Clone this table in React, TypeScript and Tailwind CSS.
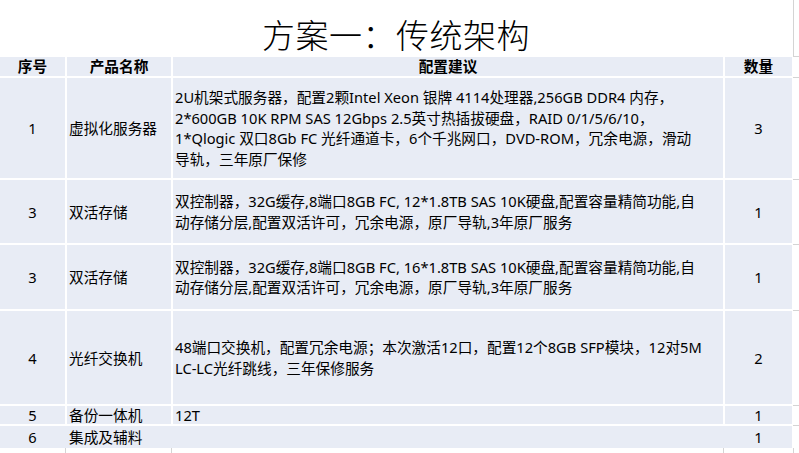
import React from "react";

const font = { fontFamily: '"Noto Sans", "Noto Sans CJK SC", sans-serif' };
const titleFont = { fontFamily: '"Liberation Sans", "Noto Sans CJK SC", sans-serif' };

function Cell({ children, className = "" }: { children?: React.ReactNode; className?: string }) {
  return <div className={"bg-[#e8ecf5] flex items-center " + className}>{children}</div>;
}

function Lines({ lines }: { lines: string[] }) {
  return (
    <div className="flex flex-col pl-[2px]">
      {lines.map((l, i) => (
        <div key={i} className="whitespace-nowrap leading-[20.5px]">
          {l}
        </div>
      ))}
    </div>
  );
}

const rows: { h: string; no: string; name: string; lines: string[]; qty: string }[] = [
  {
    h: "h-[100px]",
    no: "1",
    name: "虚拟化服务器",
    lines: [
      "2U机架式服务器，配置2颗Intel Xeon 银牌 4114处理器,256GB DDR4 内存，",
      "2*600GB 10K RPM SAS 12Gbps 2.5英寸热插拔硬盘，RAID 0/1/5/6/10，",
      "1*Qlogic 双口8Gb FC 光纤通道卡，6个千兆网口，DVD-ROM，冗余电源，滑动",
      "导轨，三年原厂保修",
    ],
    qty: "3",
  },
  {
    h: "h-[63px]",
    no: "3",
    name: "双活存储",
    lines: [
      "双控制器，32G缓存,8端口8GB FC, 12*1.8TB SAS 10K硬盘,配置容量精简功能,自",
      "动存储分层,配置双活许可，冗余电源，原厂导轨,3年原厂服务",
    ],
    qty: "1",
  },
  {
    h: "h-[64px]",
    no: "3",
    name: "双活存储",
    lines: [
      "双控制器，32G缓存,8端口8GB FC, 16*1.8TB SAS 10K硬盘,配置容量精简功能,自",
      "动存储分层,配置双活许可，冗余电源，原厂导轨,3年原厂服务",
    ],
    qty: "1",
  },
  {
    h: "h-[93px]",
    no: "4",
    name: "光纤交换机",
    lines: [
      "48端口交换机，配置冗余电源；本次激活12口，配置12个8GB SFP模块，12对5M",
      "LC-LC光纤跳线，三年保修服务",
    ],
    qty: "2",
  },
  {
    h: "h-[18px]",
    no: "5",
    name: "备份一体机",
    lines: ["12T"],
    qty: "1",
  },
];

export default function App() {
  return (
    <div className="w-[799px] h-[453px] bg-white overflow-hidden text-black text-[14.67px]" style={font}>
      <div className="flex">
        <div className="w-[792px] flex flex-col">
          <div className="h-[57px] flex items-center justify-center pt-[16px]">
            <div className="text-[33px] leading-[36px] font-light tracking-[0.5px]" style={titleFont}>
              方案一：传统架构
            </div>
          </div>
          <div className="grid grid-cols-[65px_104px_550px_67px] gap-[2px]">
            <Cell className="h-[19px] justify-center font-bold leading-[19px]">序号</Cell>
            <Cell className="h-[19px] justify-center font-bold leading-[19px]">产品名称</Cell>
            <Cell className="h-[19px] justify-center font-bold leading-[19px]">配置建议</Cell>
            <Cell className="h-[19px] justify-center font-bold leading-[19px]">数量</Cell>
            {rows.map((r, i) => (
              <React.Fragment key={i}>
                <Cell className={r.h + " justify-center"}>{r.no}</Cell>
                <Cell className={r.h + " pl-[2px] whitespace-nowrap"}>{r.name}</Cell>
                <Cell className={r.h}>
                  <Lines lines={r.lines} />
                </Cell>
                <Cell className={r.h + " justify-center"}>{r.qty}</Cell>
              </React.Fragment>
            ))}
            <div className="col-span-4 h-[22px] bg-[#e8ecf5] grid grid-cols-[65px_104px_550px_67px] gap-[2px] items-center">
              <div className="text-center">6</div>
              <div className="pl-[2px]">集成及辅料</div>
              <div></div>
              <div className="text-center">1</div>
            </div>
          </div>
          <div className="h-[5px] flex">
            <div className="w-[66px] border-r border-[#d4d4d4]"></div>
            <div className="w-[106px] border-r border-[#d4d4d4]"></div>
            <div className="w-[552px] border-r border-[#d4d4d4]"></div>
          </div>
        </div>
        <div className="w-[7px] flex flex-col">
          <div className="h-[56px] border-l border-[#d4d4d4] ml-[1px]"></div>
          <div className="h-[1px] bg-[#d4d4d4] ml-[1px]"></div>
          <div className="h-[20px]"></div>
          <div className="h-[1px] bg-[#d4d4d4] ml-[1px]"></div>
          <div className="h-[101px]"></div>
          <div className="h-[1px] bg-[#d4d4d4] ml-[1px]"></div>
          <div className="h-[64px]"></div>
          <div className="h-[1px] bg-[#d4d4d4] ml-[1px]"></div>
          <div className="h-[65px]"></div>
          <div className="h-[1px] bg-[#d4d4d4] ml-[1px]"></div>
          <div className="h-[94px]"></div>
          <div className="h-[1px] bg-[#d4d4d4] ml-[1px]"></div>
          <div className="h-[19px]"></div>
          <div className="h-[1px] bg-[#d4d4d4] ml-[1px]"></div>
          <div className="h-[22px]"></div>
          <div className="h-[5px] border-l border-[#d4d4d4] ml-[1px]"></div>
        </div>
      </div>
    </div>
  );
}
